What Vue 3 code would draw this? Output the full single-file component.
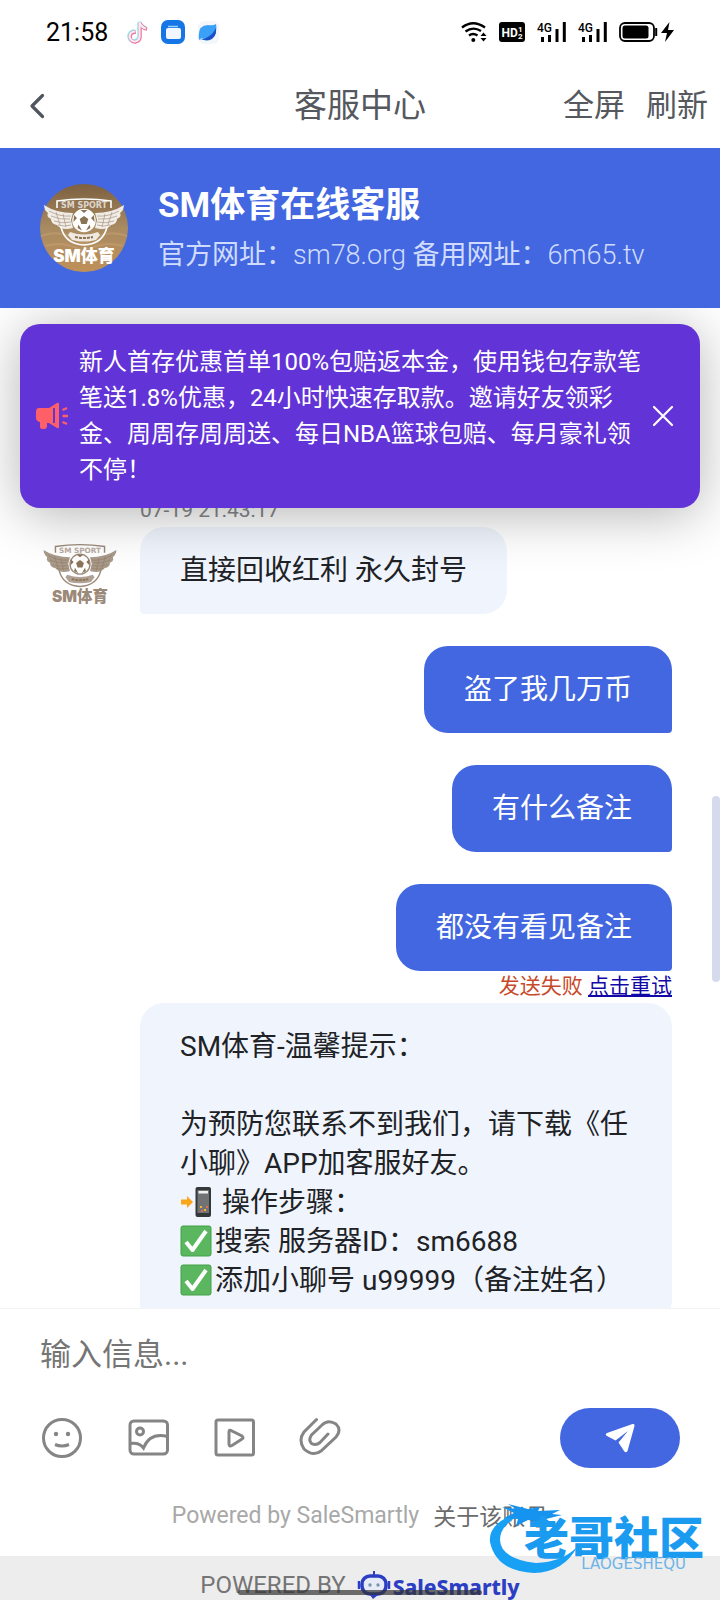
<script setup>
import { ref } from 'vue'

const draft = ref('')
const noticeOpen = ref(true)
const notice =
  '新人首存优惠首单100%包赔返本金，使用钱包存款笔\n笔送1.8%优惠，24小时快速存取款。邀请好友领彩\n金、周周存周周送、每日NBA篮球包赔、每月豪礼领\n不停！'
const sent = ['盗了我几万币', '有什么备注', '都没有看见备注']
</script>

<template>
  <div class="page">
    <svg class="defs" aria-hidden="true">
      <symbol id="emblem" viewBox="0 0 88 88">
        <path d="M17 24V17Q44 13 71 17V24" fill="none" stroke="currentColor" stroke-width="1.6" />
        <path d="M21 43Q25 60 44 61Q63 60 67 43" fill="none" stroke="currentColor" stroke-width="1.6" />
        <text x="44" y="24" text-anchor="middle" font-family="DejaVu Sans, sans-serif" font-weight="700" font-size="8" fill="currentColor" opacity=".7">SM SPORT</text>
        <g fill="currentColor" opacity=".85">
          <path d="M4 21Q16 29 33 29L31 36L33 44Q22 47 17 41Q11 40 11 35Q6 33 8 29Q4 26 4 21Z" />
          <path d="M84 21Q72 29 55 29L57 36L55 44Q66 47 71 41Q77 40 77 35Q82 33 80 29Q84 26 84 21Z" />
        </g>
        <g fill="none" stroke="#8b7356" stroke-width=".7" opacity=".7">
          <path d="M9 27Q20 33 31 32M11 32Q20 36 30 35M14 37Q22 40 31 38M18 41Q24 43 31 41M16 28L20 41M23 30L26 43" />
          <path d="M79 27Q68 33 57 32M77 32Q68 36 58 35M74 37Q66 40 57 38M70 41Q64 43 57 41M72 28L68 41M65 30L62 43" />
        </g>
        <circle cx="44" cy="36.500" r="11" fill="#fff" stroke="currentColor" stroke-width="1.5" />
        <g fill="#8b7356">
          <path d="M44 32L48.3 35.1L46.7 40.1H41.3L39.7 35.1Z" />
          <path d="M40.5 26L44 29L47.5 26ZM54 31L51 34L54.500 38ZM34 31L37 34L33.500 38ZM37.500 44L38.500 40.500L42 46.500ZM50.500 44L49.500 40.500L46 46.500Z" />
        </g>
        <path d="M30 48Q44 53 58 48L60 51L56 56Q44 59 32 56L28 51Z" fill="currentColor" opacity=".8" />
        <path d="M35 53Q44 55 53 53" stroke="#8b7356" stroke-width="2" stroke-dasharray="3 1" fill="none" />
        <text x="44" y="78" text-anchor="middle" font-family="Inter, Noto Sans CJK SC, sans-serif" font-weight="900" font-size="17" fill="currentColor">SM体育</text>
      </symbol>
      <symbol id="signal" viewBox="0 0 29 20">
        <text x="0" y="10" font-family="Roboto, sans-serif" font-size="12" font-weight="500" fill="#000">4G</text>
        <path d="M5.5 15V20M12.5 13V20M20 7V20M27.300 0V20" stroke="#000" stroke-width="3" />
      </symbol>
      <symbol id="tick" viewBox="0 0 32 32">
        <rect x="1" y="1" width="30" height="30" rx="2" fill="#5bb75f" stroke="#43a047" />
        <path d="M6 17L12.500 25L26 6" fill="none" stroke="#fff" stroke-width="4" stroke-linejoin="round" />
      </symbol>
    </svg>

    <div class="status">
      <div class="status-left">
        <span class="time">21:58</span>
        <svg width="22" height="24" viewBox="0 0 22 24" fill="none" stroke-width="3.500">
          <path d="M9 11Q3 11 3 17Q4 21 8 21Q13 20 13 16V2Q15 7 20 8" stroke="#8fe9ec" />
          <path d="M10 12Q4 12 4 17Q5 22 9 22Q14 21 14 17V3Q16 8 21 9" stroke="#f2709a" />
          <path d="M9.500 11.500Q3.500 11.500 3.500 17Q5 21.500 9 21.500Q13.500 20.500 13.500 16.500V2.500Q15.500 7.500 20 8.500" stroke="#f2edf4" stroke-width="2.200" />
        </svg>
        <svg width="24" height="24" viewBox="0 0 24 24">
          <rect width="24" height="24" rx="7" fill="#1676e6" />
          <path d="M7 6.500H17" stroke="#9bd0ff" stroke-width="1.500" />
          <rect x="5" y="8" width="15" height="11" rx="2" fill="#f2f7ff" />
        </svg>
        <svg width="22" height="24" viewBox="0 0 22 24">
          <rect width="21" height="23" y="1" rx="6" fill="#f5f6fa" />
          <path d="M1 20Q-1 5 10 5Q15 6 18 4Q20 15 12 20Q6 22 4 18Z" fill="#3ba0f8" />
          <path d="M2 20Q13 18 18 8Q19 18 11 20Z" fill="#1c50c8" />
        </svg>
      </div>
      <div class="status-right">
        <svg width="26" height="20" viewBox="0 0 26 20" fill="none" stroke="#000" stroke-width="2.400">
          <path d="M1 5.500Q12 -3 24 5.500M4.500 9.500Q12 4 20 9M8 13.500Q12 10.500 16.500 13.500" />
          <circle cx="12.300" cy="18" r="2" fill="#000" stroke="none" />
          <path d="M19.500 14L22.500 10.500L25.500 14ZM19.500 16L22.500 19.500L25.500 16Z" fill="#000" stroke="none" />
        </svg>
        <svg width="26" height="20" viewBox="0 0 26 20">
          <rect width="26" height="20" rx="3" fill="#000" />
          <text x="2.500" y="15" font-family="Roboto, sans-serif" font-weight="700" font-size="12" fill="#fff">HD</text>
          <text x="19" y="9.500" font-family="Roboto, sans-serif" font-weight="700" font-size="8" fill="#fff">1</text>
          <text x="19" y="17" font-family="Roboto, sans-serif" font-weight="700" font-size="8" fill="#fff">2</text>
        </svg>
        <svg width="29" height="20"><use href="#signal" /></svg>
        <svg width="29" height="20"><use href="#signal" /></svg>
        <svg width="56" height="20" viewBox="0 0 56 20">
          <rect x="1" y="1" width="34" height="18" rx="5" fill="none" stroke="#000" stroke-width="1.800" />
          <rect x="3.500" y="3.500" width="26" height="13" rx="2.500" fill="#000" />
          <path d="M37.200 6V14" stroke="#000" stroke-width="2" />
          <path d="M50.500 0L42 11H48L46 20L55 8H49Z" fill="#000" />
        </svg>
      </div>
    </div>

    <nav class="nav">
      <button class="back" aria-label="返回">
        <svg width="16" height="26" viewBox="0 0 16 26"><path d="M13.500 2.500L3 13L13.500 23.500" fill="none" stroke="#51565e" stroke-width="3.200" stroke-linecap="round" stroke-linejoin="round" /></svg>
      </button>
      <h1 class="nav-title">客服中心</h1>
      <div class="nav-actions">
        <button>全屏</button>
        <button>刷新</button>
      </div>
    </nav>

    <header class="header">
      <svg width="88" height="88" viewBox="0 0 88 88">
        <defs>
          <linearGradient id="bronze" x1="0" y1="0" x2="0" y2="1">
            <stop offset="0" stop-color="#7c6040" />
            <stop offset=".5" stop-color="#a98b62" />
            <stop offset="1" stop-color="#bf9059" />
          </linearGradient>
        </defs>
        <circle cx="44" cy="44" r="44" fill="url(#bronze)" />
        <path d="M1 52Q22 44 44 60Q66 44 87 52M5 62Q25 56 44 68Q63 56 83 62" fill="none" stroke="#cda777" stroke-width="2" opacity=".45" />
        <use href="#emblem" width="88" height="88" />
      </svg>
      <div>
        <h2>SM体育在线客服</h2>
        <p><span>官方网址：</span>sm78.org <span>备用网址：</span>6m65.tv</p>
      </div>
    </header>

    <main class="chat">
      <div v-if="noticeOpen" class="notice">
        <svg width="34" height="30" viewBox="0 0 34 30">
          <path d="M4 7H14L22 2Q24 1 24 3V26Q24 28 22 27L14 22H12V25Q12 28 9 28H7Q5 28 5 25V21Q1 20 1 17V11Q1 7 4 7Z" fill="#ff6068" />
          <path d="M19 7V22" stroke="#6233d6" stroke-width="2" />
          <path d="M27.500 9L32 7M27.500 15H33M27.500 21L32 23" stroke="#ff6068" stroke-width="2.400" />
        </svg>
        <p class="notice-text">{{ notice }}</p>
        <button class="close" aria-label="关闭" @click="noticeOpen = false">
          <svg width="22" height="22" viewBox="0 0 22 22"><path d="M2 2L20 20M20 2L2 20" stroke="#fff" stroke-width="2.200" stroke-linecap="round" /></svg>
        </button>
      </div>

      <div class="messages">
        <time class="stamp">07-19 21:43:17</time>
        <div class="row">
          <svg class="agent" width="80" height="80" viewBox="0 0 88 88"><use href="#emblem" /></svg>
          <div class="bubble agent-bubble">直接回收红利 永久封号</div>
        </div>
        <div v-for="text in sent" :key="text" class="row mine">
          <div class="bubble my-bubble">{{ text }}</div>
        </div>
        <div class="failed"><span>发送失败</span> <a href="#retry">点击重试</a></div>
        <div class="row last">
          <div class="bubble agent-bubble tips">
            <p>SM体育-温馨提示：</p>
            <p></p>
            <p>为预防您联系不到我们，请下载《任小聊》APP加客服好友。</p>
            <p>
              <svg class="emoji" width="32" height="32" viewBox="0 0 32 32">
                <rect x="15.500" y="1" width="15.500" height="30" rx="2" fill="#35383b" />
                <rect x="17.500" y="4" width="11.500" height="23" fill="#707274" />
                <rect x="18.500" y="5" width="9.500" height="2.500" fill="#f1f1f1" />
                <path d="M20 20H22V22H20ZM24 23H26V25H24Z" fill="#f3b53b" />
                <path d="M26 20H28V22H26ZM21 24H23V26H21Z" fill="#e66a4f" />
                <path d="M1 13.500H7V10L13 16L7 22V18.500H1Z" fill="#f9a61a" />
              </svg> 操作步骤：
            </p>
            <p><svg class="emoji" width="32" height="32"><use href="#tick" /></svg>搜索 服务器ID：sm6688</p>
            <p><svg class="emoji" width="32" height="32"><use href="#tick" /></svg>添加小聊号 u99999（备注姓名）</p>
          </div>
        </div>
      </div>
      <div class="scrollbar"></div>
    </main>

    <form class="composer" @submit.prevent>
      <input v-model="draft" class="field" type="text" placeholder="输入信息..." aria-label="输入信息" />
      <div class="tools">
        <button type="button" aria-label="表情">
          <svg width="42" height="42" viewBox="0 0 42 42">
            <circle cx="21" cy="21" r="18.500" />
            <path d="M14 27.500Q21 30.500 28 27.500" />
            <circle class="dot" cx="15" cy="17" r="2.200" /><circle class="dot" cx="27" cy="17" r="2.200" />
          </svg>
        </button>
        <button type="button" aria-label="图片">
          <svg width="42" height="42" viewBox="-1 0 42 42">
            <rect x="2" y="4" width="37.500" height="33" rx="4" />
            <circle cx="12" cy="14.500" r="3.500" />
            <path d="M2 26.500Q11 25 15.500 31Q22 15 39.500 19.500" />
          </svg>
        </button>
        <button type="button" aria-label="视频">
          <svg width="42" height="42" viewBox="0 0 42 42">
            <rect x="3" y="3" width="37.500" height="35" rx="2" />
            <path d="M16 15Q16 12 19 14L29 19Q31 21 29 22L19 28.500Q16 30 16 27Z" />
          </svg>
        </button>
        <button type="button" aria-label="附件">
          <svg width="42" height="42" viewBox="0 0 42 42">
            <path d="M17.500 2.500L5 15Q-1 23 5 32Q14 40 22 34L37 20Q43 13 37 7Q29 2 23 8L12.500 18Q9 23 12.500 26.500Q17 29 21 25.500L29 17" stroke-linecap="round" />
          </svg>
        </button>
        <button class="send" type="submit" aria-label="发送">
          <svg width="32" height="32" viewBox="0 0 32 32">
            <path d="M3 11L28.500 2Q31 1.500 30.500 4L23.500 29Q22 31.500 20 29L14.500 20.500L24 9L11.500 18.500L3 14Q0.500 12.500 3 11Z" />
          </svg>
        </button>
      </div>
      <div class="credit">
        <span>Powered by SaleSmartly</span>
        <a href="#about">关于该账号</a>
      </div>
    </form>

    <footer class="footer">
      <span>POWERED BY</span>
      <svg width="34" height="30" viewBox="0 0 34 30">
        <path d="M17 1V5" stroke="#2c3fc4" stroke-width="2" />
        <rect x="5" y="6" width="24" height="18" rx="8" fill="#e6ebf7" stroke="#2c3fc4" stroke-width="3.500" />
        <path d="M2 11V19M32 11V19" stroke="#2c3fc4" stroke-width="2.500" />
        <path d="M13 25H21L16 29Z" fill="#2c3fc4" />
        <circle cx="13" cy="15" r="1.700" fill="#7897a8" /><circle cx="21" cy="15" r="1.700" fill="#7897a8" />
      </svg>
      <strong>SaleSmartly</strong>
      <div class="home-bar"></div>
    </footer>

    <div class="watermark">
      <svg class="swoosh" width="96" height="76" viewBox="0 0 96 76">
        <path d="M24 14Q2 24 4 40Q10 69 48 71Q78 70 91 45Q76 60 50 61Q15 57 14 38Q14 24 32 14Z" fill="#18a0f4" />
        <path d="M16 5L30 7L22 2L42 7L54 5L52 9L74 8L66 12L76 13L60 17L66 21L42 18L30 24L32 17L18 16L28 11Z" fill="#1593ee" />
      </svg>
      <div class="mark-text">
        <span class="mark-name">老哥社区</span>
        <span class="mark-latin">LAOGESHEQU</span>
      </div>
    </div>
  </div>
</template>

<style>
body {
  margin: 0;
  background: #fff;
}
</style>

<style scoped>
.page {
  position: relative;
  display: flex;
  flex-direction: column;
  height: 100vh;
  overflow: hidden;
  background: #fff;
  font-family: Roboto, "Noto Sans CJK SC", sans-serif;
  color: #202226;
}
.defs {
  display: none;
}
h1, h2, p {
  margin: 0;
  font-weight: 400;
}
button {
  padding: 0;
  border: 0;
  background: none;
  font: inherit;
  color: inherit;
  cursor: pointer;
}
svg {
  flex: none;
}
button svg {
  display: block;
}
.status {
  display: flex;
  justify-content: space-between;
  align-items: center;
  height: 64px;
  padding: 0 45px 0 46px;
}
.status-left {
  display: flex;
  align-items: center;
  gap: 13px;
}
.time {
  margin-right: 5px;
  font-size: 25px;
  color: #000;
}
.status-right {
  display: flex;
  align-items: center;
  gap: 12px;
}
.nav {
  display: grid;
  grid-template-columns: minmax(0, 1fr) auto minmax(0, 1fr);
  align-items: center;
  height: 84px;
  padding: 0 12px;
  color: #55585d;
}
.back {
  justify-self: start;
  padding-left: 17px;
}
.nav-title {
  font-size: 33px;
  line-height: 48px;
}
.nav-actions {
  display: flex;
  justify-content: flex-end;
  gap: 21px;
  font-size: 31px;
  line-height: 44px;
}
.header {
  display: flex;
  align-items: center;
  gap: 30px;
  height: 160px;
  padding: 0 40px;
  background: #4267e0;
  color: #fff;
}
.header h2 {
  padding-top: 6px;
  font-size: 35px;
  line-height: 48px;
  font-weight: 700;
  white-space: nowrap;
}
.header p {
  font-size: 27px;
  line-height: 50px;
  font-weight: 300;
  color: #cfdcff;
  white-space: nowrap;
}
.header span {
  font-weight: 400;
}
.chat {
  position: relative;
  flex: 1;
  min-height: 0;
  overflow: hidden;
}
.notice {
  position: absolute;
  z-index: 2;
  top: 16px;
  left: 20px;
  right: 20px;
  display: flex;
  align-items: center;
  padding: 20px 22px 20px 15px;
  border-radius: 20px;
  background: #6233d6;
  box-shadow: 0 6px 54px rgba(0, 0, 0, 0.3);
  color: #fff;
}
.notice-text {
  flex: 1;
  margin-left: 10px;
  font-size: 24px;
  line-height: 36px;
  white-space: pre-line;
}
.close {
  display: flex;
  justify-content: center;
  width: 30px;
}
.messages {
  display: flex;
  flex-direction: column;
  padding: 190px 48px 0 38px;
}
.stamp {
  margin: 0 0 5px 102px;
  font-size: 21px;
  line-height: 24px;
  color: #85878b;
}
.row {
  display: flex;
  align-items: flex-start;
  gap: 18px;
  margin-bottom: 32px;
}
.row.mine {
  justify-content: flex-end;
}
.bubble {
  padding: 24px 40px;
  border-radius: 24px;
  font-size: 28px;
  line-height: 39px;
}
.agent {
  margin: 4px 2px 0;
  color: #9b8979;
}
.agent-bubble {
  border-bottom-left-radius: 4px;
  background: #f0f5fd;
}
.my-bubble {
  border-bottom-right-radius: 4px;
  background: #4267e0;
  color: #fff;
}
.failed {
  height: 32px;
  margin-top: -32px;
  font-size: 21px;
  line-height: 30px;
  text-align: right;
  color: #c8492a;
}
.failed a {
  color: #1208a8;
}
.row.last {
  margin-bottom: 0;
  padding-left: 102px;
}
.tips {
  flex: 1;
}
.tips p {
  min-height: 39px;
  max-height: 78px;
}
.emoji {
  margin-right: 3px;
  vertical-align: -6px;
}
.scrollbar {
  position: absolute;
  top: 488px;
  right: 0;
  width: 8px;
  height: 186px;
  border-radius: 4px;
  background: #d5dbec;
}
.composer {
  padding: 20px 40px 26px;
  border-top: 1px solid #f1f2f4;
}
.field {
  display: block;
  box-sizing: border-box;
  width: 100%;
  height: 50px;
  padding: 0;
  border: 0;
  outline: 0;
  background: none;
  font: inherit;
  font-size: 31px;
}
.field::placeholder {
  color: #757575;
}
.tools {
  display: flex;
  align-items: center;
  gap: 44px;
  margin-top: 29px;
  padding-left: 1px;
}
.tools svg {
  fill: none;
  stroke: #858585;
  stroke-width: 3;
}
.tools .dot {
  fill: #858585;
  stroke: none;
}
.send {
  display: flex;
  align-items: center;
  justify-content: center;
  width: 120px;
  height: 60px;
  margin-left: auto;
  border-radius: 30px;
  background: #4267e0;
}
.tools .send svg {
  fill: #fff;
  stroke: none;
}
.credit {
  display: flex;
  justify-content: center;
  align-items: center;
  gap: 14px;
  height: 30px;
  margin-top: 32px;
  font-size: 23px;
  color: #a8a8a8;
}
.credit a {
  color: #6b6b6b;
  text-decoration: none;
}
.footer {
  position: relative;
  display: flex;
  justify-content: center;
  align-items: flex-end;
  height: 44px;
  background: #ededed;
  font-size: 24px;
  line-height: 30px;
  color: #757575;
}
.footer svg {
  margin-left: 11px;
}
.footer strong {
  margin-left: 2px;
  font-family: "Noto Sans", sans-serif;
  font-size: 21px;
  font-weight: 800;
  line-height: 26px;
  color: #2c3fc4;
}
.home-bar {
  position: absolute;
  bottom: 5px;
  left: 33%;
  right: 33%;
  height: 5px;
  border-radius: 3px;
  background: rgba(50, 50, 50, 0.7);
}
.watermark {
  position: absolute;
  right: 16px;
  bottom: 22px;
  display: flex;
  color: #1a9bf0;
}
.swoosh {
  margin-right: -58px;
}
.mark-text {
  display: flex;
  flex-direction: column;
  align-items: flex-end;
  padding-top: 14px;
}
.mark-name {
  font-family: "Noto Sans CJK SC", sans-serif;
  font-size: 45px;
  font-weight: 900;
  line-height: 40px;
}
.mark-latin {
  margin-right: 18px;
  font-family: "DejaVu Sans", sans-serif;
  font-size: 15px;
  line-height: 16px;
  color: #6fb4e6;
}
</style>
